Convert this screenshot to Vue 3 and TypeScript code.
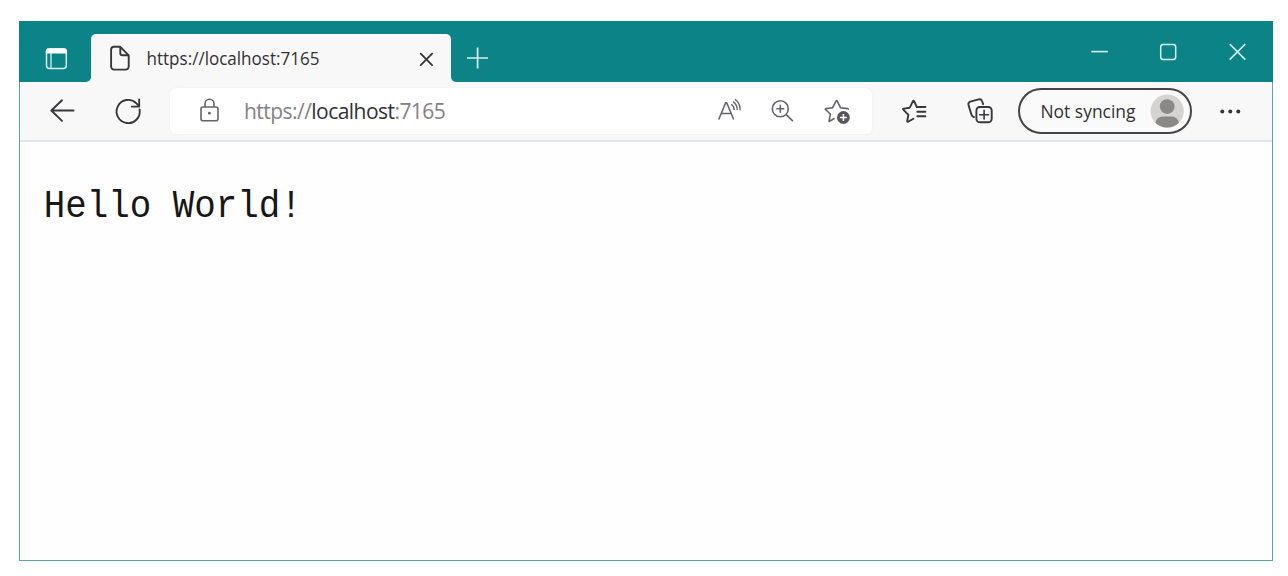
<script setup lang="ts">
const tabTitle = 'https://localhost:7165'
const url = { scheme: 'https://', host: 'localhost', port: ':7165' }
const syncLabel = 'Not syncing'
const body = 'Hello World!'
</script>

<template>
  <div class="page">
    <div class="window">
      <header class="titlebar">
        <div class="side">
          <svg class="tab-actions" viewBox="44 46 26 26" width="26" height="26">
            <rect x="46.5" y="49" width="19.8" height="19.4" rx="3" class="light" stroke-width="1.5" />
            <path d="M45.8 53.6V51.3a3 3 0 0 1 3-3h15.2a3 3 0 0 1 3 3v2.3z" fill="#fff" />
            <path d="M51 53v15" class="light" stroke-width="1.3" />
          </svg>
        </div>
        <div class="tab">
          <svg viewBox="91 34 360 49" width="360" height="49">
            <path d="M120.3 46.8h-6.2a3 3 0 0 0-3 3v16.8a3 3 0 0 0 3 3h11.6a3 3 0 0 0 3-3V55.3zM120.3 47v6.3a2 2 0 0 0 2 2h6.4" class="dark strong" />
            <text x="146.5" y="64.7" font-size="18" textLength="173" lengthAdjust="spacingAndGlyphs" fill="#343135">{{ tabTitle }}</text>
            <path d="M420.7 53.7l11.4 11.4M432.1 53.7l-11.4 11.4" class="dark strong" />
          </svg>
        </div>
        <div class="rest">
          <svg viewBox="451 46 50 24" width="50" height="24">
            <path d="M467 58h21M477.6 47.5v21" class="light" stroke-width="1.7" />
          </svg>
          <svg class="controls" viewBox="1088 40 160 24" width="160" height="24">
            <path d="M1091.3 51.6h16.5" class="light" stroke-width="1.6" />
            <rect x="1160.7" y="44.4" width="15" height="15" rx="2.5" class="light" stroke-width="1.5" />
            <path d="M1229.7 44l15.6 15.6M1245.3 44l-15.6 15.6" class="light" stroke-width="1.6" />
          </svg>
        </div>
      </header>

      <nav class="toolbar">
        <svg viewBox="20 82 150 58" width="150" height="58">
          <path d="M73.6 110.5H51.3M62 100.3L51.3 110.5 62 120.9" class="dark strong" />
          <path d="M139.6 109.4A11.6 11.6 0 1 1 136.4 103.3L139 106" class="dark strong" />
          <path d="M139.2 99.4v7.2h-7.4" class="dark strong" />
        </svg>
        <div class="address">
          <svg viewBox="170 88 74 46" width="74" height="46">
            <g class="soft">
              <rect x="201" y="107" width="17" height="13.8" rx="2" />
              <path d="M205 107v-3.2a4.5 4.5 0 0 1 9 0v3.2" />
              <circle cx="209.4" cy="113.2" r="1.4" fill="#67646a" stroke="none" />
            </g>
          </svg>
          <div class="url"><span>{{ url.scheme }}</span><span class="host">{{ url.host }}</span><span>{{ url.port }}</span></div>
          <svg class="actions" viewBox="712 88 160 46" width="160" height="46">
            <g class="soft">
              <path d="M718.7 119.5l7-16.8h1l7 16.8M721.2 113.5h10" />
              <path d="M731.2 104.2q3 2.1 3 5.8M733 101.6q4.3 3 4.2 8.4M735 99.2q5.4 4 5.1 11" stroke-width="1.4" />
              <circle cx="780.3" cy="108.8" r="8" />
              <path d="M786.2 114.6l6.7 6.5M776.3 108.8h8M780.3 104.8v8" />
              <path d="M834.5 118.3L829.7 121.3Q828.9 121.7 829.1 120.7L830.4 114.3 825.6 109.5Q825.1 108.8 826 108.6L832.6 107.7 836 101.1Q836.6 100.1 837.2 101.1L840.5 107.7 847.6 108.6Q848.6 108.9 848 109.5" />
            </g>
            <circle cx="843.4" cy="117.5" r="6.4" fill="#59565b" />
            <path d="M839.9 117.5h7M843.4 114v7" stroke="#fff" stroke-width="1.6" />
          </svg>
        </div>
        <svg viewBox="872 82 146 58" width="146" height="58">
          <path d="M913.4 118.7L908.2 121.7Q907 122.3 907.2 121L908.4 114.8 903.3 109.7Q902.5 108.8 903.8 108.6L909.8 107.7 912.8 101.4Q913.5 100.2 914.2 101.4L916.8 107H925.4M917.3 111.7h8.1M917.3 116.3h8.1" class="dark strong" />
          <rect x="976.4" y="107" width="15.3" height="15.3" rx="3.5" class="dark strong" />
          <path d="M979.7 114.7h8.8M984.1 110.3v8.8" class="dark" />
          <path d="M974 117Q972 116.5 971.4 114.5L968.5 105Q968 102.5 970.2 101.7L978.7 99.3Q981.3 98.8 982 101L983.2 104.2" class="dark strong" />
        </svg>
        <div class="profile">
          <svg viewBox="1020 90 170 42" width="170" height="42">
            <text x="1040.5" y="117.6" font-size="17.5" textLength="95" lengthAdjust="spacingAndGlyphs" fill="#343034">{{ syncLabel }}</text>
            <circle cx="1167.2" cy="111.2" r="16.6" fill="#d5d3d2" />
            <circle cx="1167.2" cy="106.6" r="7.4" fill="#8b8988" />
            <path d="M1155.4 122.8Q1157 116.5 1163 116.5h8.4Q1177.4 116.5 1179 122.8Q1174 127.6 1167.2 127.6T1155.4 122.8z" fill="#8b8988" />
          </svg>
        </div>
        <svg viewBox="1192 82 80 58" width="80" height="58">
          <g fill="#39373a">
            <circle cx="1222.3" cy="111.4" r="2" />
            <circle cx="1230.3" cy="111.4" r="2" />
            <circle cx="1238.3" cy="111.4" r="2" />
          </g>
        </svg>
      </nav>

      <main class="content">
        <svg viewBox="20 142 400 100" width="400" height="100">
          <text class="mono" x="43.8" y="216.8" font-size="38.5" textLength="258" lengthAdjust="spacingAndGlyphs">{{ body }}</text>
        </svg>
      </main>
    </div>
  </div>
</template>

<style scoped>
.page {
  box-sizing: border-box;
  width: 1288px;
  height: 576px;
  padding: 21px 15px 15px 19px;
  background: #fff;
}
.window {
  box-sizing: border-box;
  display: flex;
  flex-direction: column;
  width: 1254px;
  height: 540px;
  border: 1px solid #5ba5a8;
  border-top: 0;
  background: #fefefe;
}
svg {
  display: block;
  flex: none;
}
text,
.url {
  font-family: "Open Sans", "Noto Sans", sans-serif;
}
.light {
  fill: none;
  stroke: #d8efee;
}
.dark {
  fill: none;
  stroke: #39373a;
  stroke-width: 1.6;
  stroke-linecap: round;
  stroke-linejoin: round;
}
.strong {
  stroke-width: 1.9;
}
.soft {
  fill: none;
  stroke: #67646a;
  stroke-width: 1.6;
}
.titlebar {
  display: flex;
  flex: none;
  height: 61px;
  margin: 0 -1px;
  background: linear-gradient(#0b8387 0 30px, #f8f8f9 30px);
}
.side,
.rest {
  background: #0b8387;
}
.side {
  box-sizing: border-box;
  width: 72px;
  padding: 25px 0 0 25px;
  border-bottom-right-radius: 5px;
}
.tab {
  width: 360px;
  margin-top: 13px;
  background: #f8f8f9;
  border-radius: 5px 5px 0 0;
}
.rest {
  display: flex;
  flex: 1;
  padding-top: 25px;
  border-bottom-left-radius: 5px;
}
.controls {
  margin: -6px 25px 0 auto;
}
.toolbar {
  display: flex;
  align-items: center;
  height: 58px;
  flex: none;
  background: #f8f8f9;
  border-bottom: 2px solid #dfe4e8;
}
.address {
  display: flex;
  width: 702px;
  height: 46px;
  background: #fff;
  border-radius: 6px;
  box-shadow: 0 0 2px #e9e9eb;
}
.url {
  font-size: 21px;
  line-height: 46px;
  letter-spacing: -0.54px;
  white-space: nowrap;
  color: #858087;
}
.host {
  color: #343036;
}
.actions {
  margin-left: auto;
}
.profile {
  box-sizing: border-box;
  width: 174px;
  height: 46px;
  border: 2px solid #454347;
  border-radius: 23px;
  background: #fafafa;
}
.content {
  flex: 1;
}
.mono {
  font-family: "Liberation Mono", monospace;
  fill: #171717;
}
</style>
